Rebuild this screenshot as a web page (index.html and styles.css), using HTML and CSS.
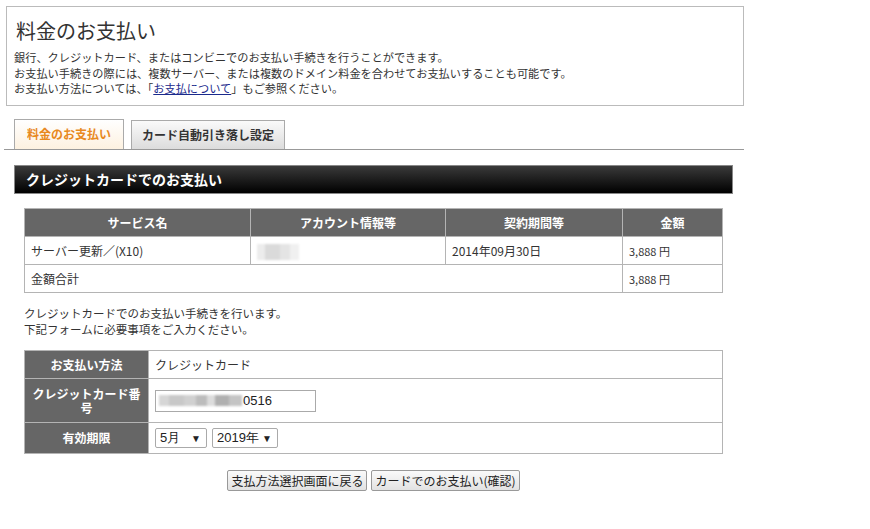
FILE: index.html
```html
<!DOCTYPE html>
<html lang="ja">
<head>
  <meta charset="utf-8">
  <title>料金のお支払い</title>
  <link rel="stylesheet" href="styles.css">
</head>
<body>
  <div class="page">
    <div class="intro">
      <h1>料金のお支払い</h1>
      <p>銀行、クレジットカード、またはコンビニでのお支払い手続きを行うことができます。<br>
      お支払い手続きの際には、複数サーバー、または複数のドメイン料金を合わせてお支払いすることも可能です。<br>
      お支払い方法については、「<a href="#">お支払について</a>」もご参照ください。</p>
    </div>

    <ul class="tabs">
      <li class="tab active">料金のお支払い</li>
      <li class="tab">カード自動引き落し設定</li>
    </ul>

    <div class="content">
      <h2 class="section-title">クレジットカードでのお支払い</h2>

      <table class="items">
        <tr>
          <th class="col-service">サービス名</th>
          <th class="col-account">アカウント情報等</th>
          <th class="col-term">契約期間等</th>
          <th class="col-price">金額</th>
        </tr>
        <tr>
          <td>サーバー更新／(X10)</td>
          <td><span class="blur blur-account"></span></td>
          <td>2014年09月30日</td>
          <td class="price">3,888 円</td>
        </tr>
        <tr>
          <td colspan="3">金額合計</td>
          <td class="price">3,888 円</td>
        </tr>
      </table>

      <p class="note">クレジットカードでのお支払い手続きを行います。<br>
      下記フォームに必要事項をご入力ください。</p>

      <table class="form">
        <tr class="row-method">
          <th>お支払い方法</th>
          <td>クレジットカード</td>
        </tr>
        <tr class="row-card">
          <th>クレジットカード番号</th>
          <td>
            <div class="text-input"><span class="blur blur-card"></span>0516</div>
          </td>
        </tr>
        <tr class="row-expiry">
          <th>有効期限</th>
          <td>
            <div class="selects">
              <span class="select select-month">5月<span class="arrow">▼</span></span>
              <span class="select select-year">2019年<span class="arrow">▼</span></span>
            </div>
          </td>
        </tr>
      </table>

      <div class="actions">
        <button>支払方法選択画面に戻る</button>
        <button>カードでのお支払い(確認)</button>
      </div>
    </div>
  </div>
</body>
</html>
```

FILE: styles.css
```css
body {
  margin: 0;
  font-family: "Noto Sans CJK JP", sans-serif;
  font-size: 12px;
  color: #333;
  background-color: #fff;
}
.page {
  padding: 6px;
  width: 738px;
}
.intro {
  border: 1px solid #bbb;
  height: 98px;
  padding: 0 7px;
}
.intro h1 {
  margin: 11px 0 6px 2px;
  font-size: 20px;
  font-weight: normal;
  line-height: 26px;
  color: #333;
}
.intro p {
  margin: 0;
  line-height: 15.5px;
  font-size: 11.2px;
}
.intro a {
  color: #1a2a8c;
}
.tabs {
  display: flex;
  align-items: flex-end;
  list-style: none;
  margin: 13px 0 0 -2px;
  padding: 0 0 0 10px;
  border-bottom: 1px solid #999;
  height: 30px;
}
.tab {
  box-sizing: border-box;
  height: 29px;
  margin-right: 7px;
  padding: 0 10px;
  border: 1px solid #aaa;
  border-bottom: none;
  font-weight: bold;
  font-size: 12px;
  line-height: 28px;
  color: #333;
  background: linear-gradient(#fafafa, #dcdcdc);
}
.tab.active {
  height: 30px;
  padding: 0 12px;
  color: #e8891e;
  background: linear-gradient(#fff, #fdf1e0);
}
.content {
  margin-left: 8px;
  width: 719px;
}
.section-title {
  box-sizing: border-box;
  margin: 15px 0 0;
  height: 29px;
  padding-left: 11px;
  border: 1px solid #888;
  background: linear-gradient(#3a3a3a, #000);
  color: #fff;
  font-size: 14px;
  font-weight: bold;
  line-height: 27px;
}
table {
  border-collapse: collapse;
  margin-left: 10px;
  width: 699px;
}
th, td {
  border: 1px solid #b4b4b4;
  padding: 0 6px;
  text-align: left;
  font-size: 12px;
}
th {
  background-color: #666;
  color: #fff;
  font-weight: bold;
  text-align: center;
}
.items {
  margin-top: 14px;
}
.items tr {
  height: 28px;
}
.col-service {
  width: 213px;
}
.col-account {
  width: 182px;
}
.col-term {
  width: 164px;
}
.price {
  font-size: 11px;
}
.blur {
  display: inline-block;
  vertical-align: middle;
  filter: blur(0.8px);
}
.blur-account {
  width: 42px;
  height: 16px;
  background: linear-gradient(90deg, #ececec 0 20%, #dadada 20% 55%, #e4e4e4 55% 78%, #f0f0f0 78%);
}
.note {
  margin: 13px 0 0 10px;
  font-size: 11.5px;
  line-height: 15.5px;
}
.form {
  margin-top: 13px;
}
.form th {
  width: 111px;
  line-height: 14px;
}
.form td {
  padding-left: 6px;
}
.row-method {
  height: 28px;
}
.row-card {
  height: 44px;
}
.row-expiry {
  height: 31px;
}
.text-input {
  box-sizing: border-box;
  display: flex;
  align-items: center;
  width: 161px;
  height: 22px;
  border: 1px solid #aaa;
  padding-left: 3px;
  font-family: "Liberation Sans", Arial, sans-serif;
  font-size: 13px;
  color: #222;
}
.blur-card {
  width: 83px;
  height: 11px;
  margin-right: 1px;
  background: linear-gradient(90deg, #d6d6d6 0 12%, #c8c8c8 12% 30%, #d0d0d0 30% 45%, #bcbcbc 45% 58%, #dcdcdc 58% 68%, #b0b0b0 68% 84%, #c4c4c4 84%);
}
.selects {
  display: flex;
  gap: 5px;
}
.select {
  box-sizing: border-box;
  display: inline-flex;
  align-items: center;
  justify-content: space-between;
  height: 20px;
  padding: 0 5px 0 4px;
  border: 1px solid #aaa;
  border-radius: 2px;
  font-family: "Liberation Sans", Arial, sans-serif;
  font-size: 13px;
  color: #222;
}
.select-month {
  width: 52px;
}
.select-year {
  width: 66px;
}
.arrow {
  font-size: 10px;
}
.actions {
  display: flex;
  justify-content: center;
  gap: 4px;
  margin: 16px 0 0 10px;
  width: 699px;
}
button {
  height: 21px;
  padding: 0 3px;
  border: 1px solid #999;
  border-radius: 2px;
  background: linear-gradient(#fafafa, #e2e2e2);
  font-family: "Noto Sans CJK JP", sans-serif;
  font-size: 12px;
  color: #222;
}
```
